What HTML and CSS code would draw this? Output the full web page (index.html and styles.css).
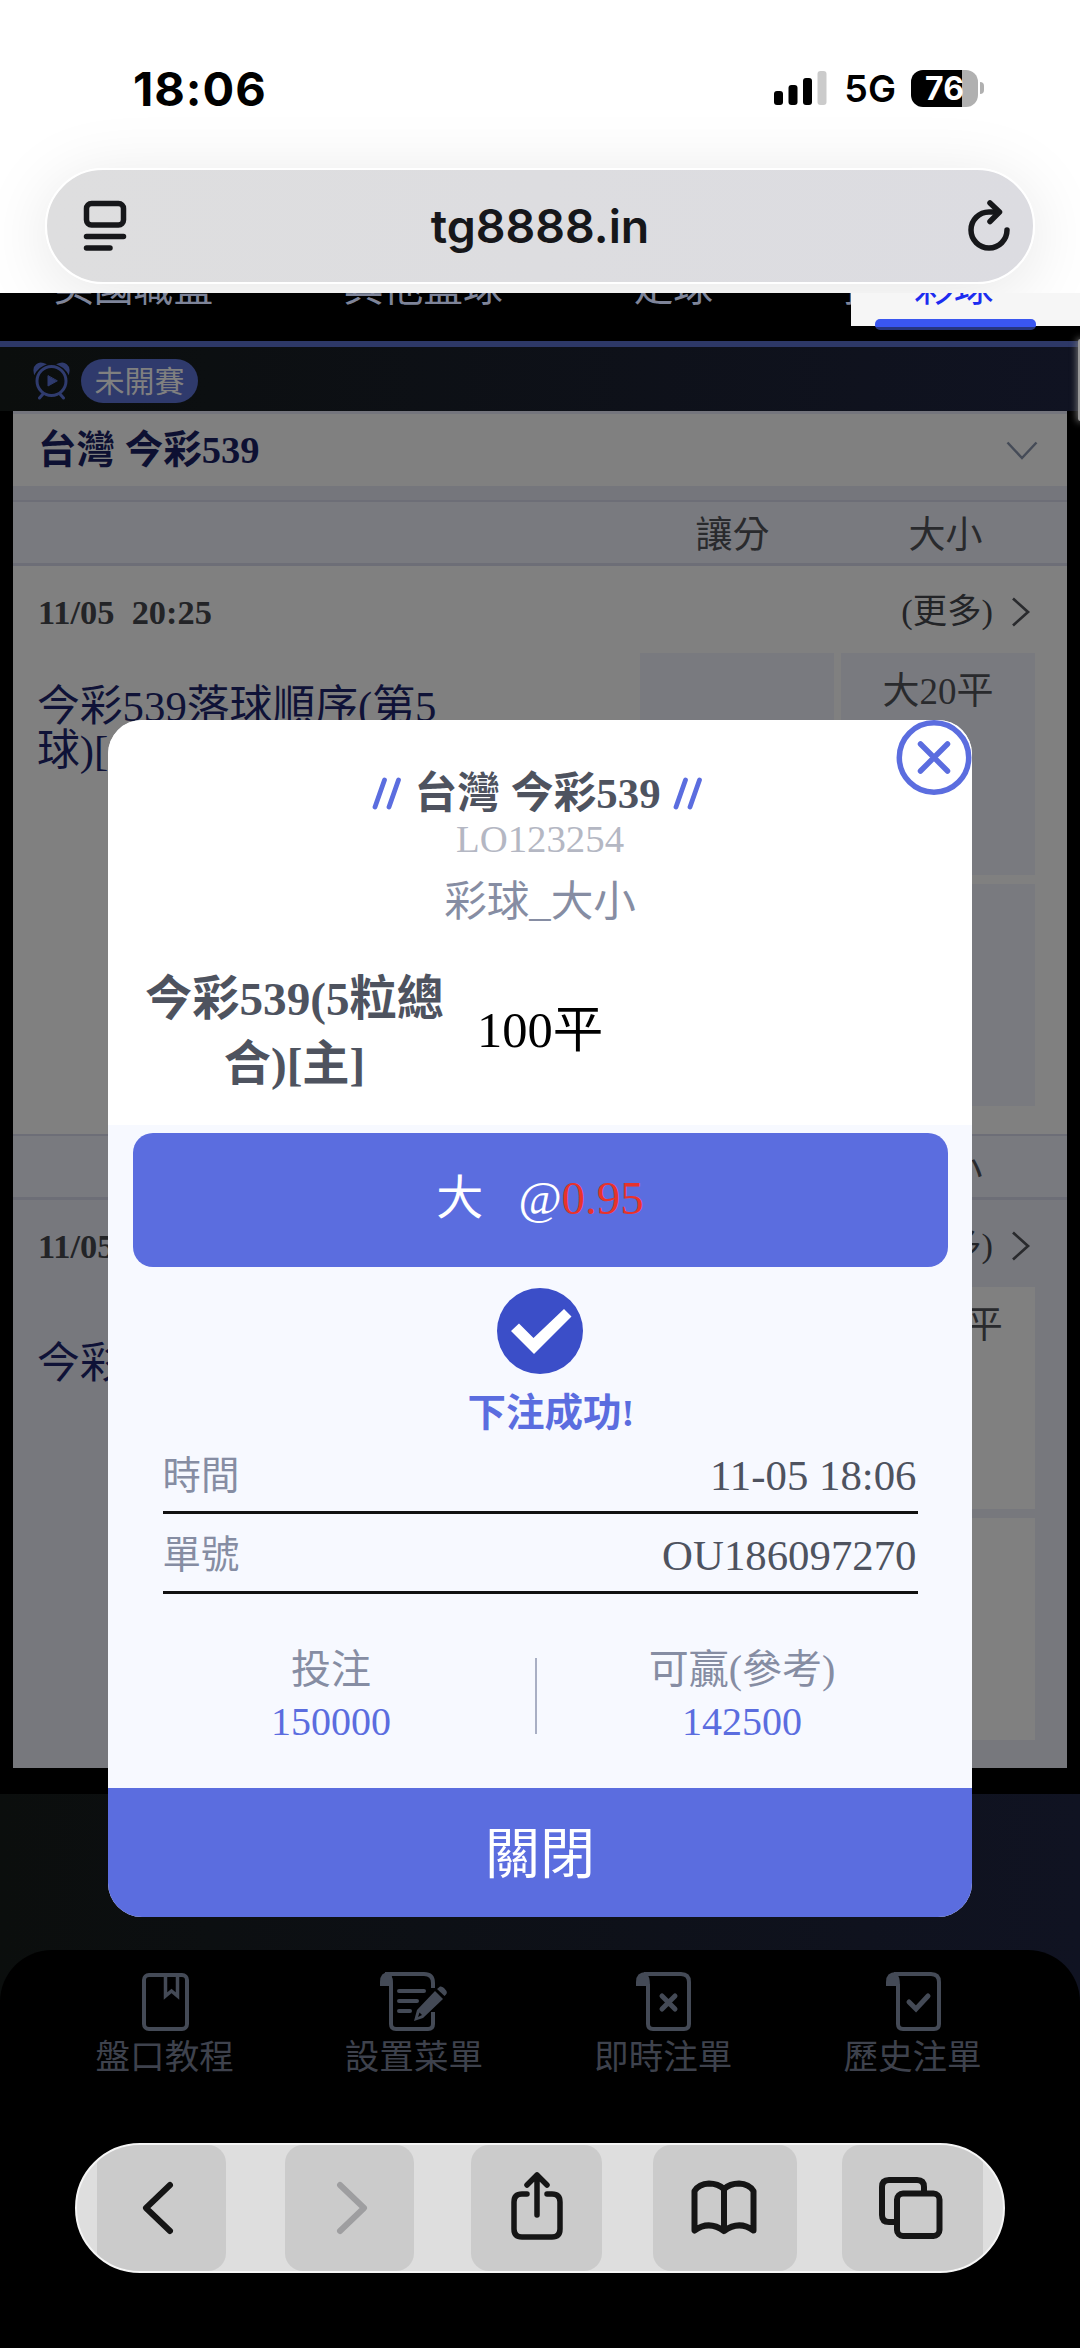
FILE: index.html
```html
<!DOCTYPE html>
<html lang="zh-Hant">
  <head>
    <meta charset="UTF-8" />
    <meta name="viewport" content="width=device-width, initial-scale=1.0" />
    <title>台灣 今彩539</title>
    <link rel="stylesheet" href="styles.css">
  </head>
  <body>
    <header class="browser-top">
      <div class="status-bar">
        <span class="status-time">18:06</span>
        <div class="status-icons">
          <svg class="signal" width="53" height="34" viewBox="0 0 53 34">
            <rect x="0" y="20" width="9" height="14" rx="3" />
            <rect x="14.5" y="14" width="9" height="20" rx="3" />
            <rect x="29" y="7" width="9" height="27" rx="3" />
            <rect x="43.5" y="0" width="9" height="34" rx="3" fill="#cbcbcb" />
          </svg>
          <span class="network">5G</span>
          <div class="battery"><span>76</span></div>
          <div class="battery-cap"></div>
        </div>
      </div>
      <div class="url-bar">
        <svg width="44" height="52" viewBox="0 0 44 52" fill="none" stroke="#16171a" stroke-width="5.5" stroke-linecap="round">
          <rect x="3.5" y="3.5" width="37" height="21.5" rx="5" />
          <path d="M3.500 36.500H40.500M3.500 48H27" />
        </svg>
        <span>tg8888.in</span>
        <svg width="44" height="52" viewBox="0 0 44 52" fill="none" stroke="#16171a" stroke-width="5.5" stroke-linecap="round" stroke-linejoin="round">
          <path d="M39 30A18 18 0 1 1 21 12H30" />
          <path d="M22 3L31.500 12L22 21.500" />
        </svg>
      </div>
    </header>

    <nav class="sport-tabs">
      <div class="tab-list">
        <span>美國職籃</span>
        <span>其他籃球</span>
        <span>足球</span>
        <span>排</span>
      </div>
      <div class="tab-active">
        <span>彩球</span>
      </div>
    </nav>

    <main>
      <div class="live-bar">
        <svg width="37" height="38" viewBox="0 0 37 38" fill="none" stroke="#2f3b6e" stroke-width="3" stroke-linecap="round">
          <circle cx="18.500" cy="19" r="14.500" />
          <path d="M10 32L6.500 36M27 32L30.500 36" />
          <path d="M2 9A6 6 0 0 1 10 2.500Q4.500 5 2 9ZM35 9A6 6 0 0 0 27 2.500Q32.500 5 35 9Z" fill="#2f3b6e" />
          <path d="M15 14V24L24 19Z" fill="#2f3b6e" stroke-width="1" />
        </svg>
        <span class="live-pill">未開賽</span>
        <i class="edge-glow"></i>
      </div>

      <div class="league">
        <div class="league-title">
          <span>台灣 今彩539</span>
          <svg width="32" height="20" viewBox="0 0 32 20" fill="none" stroke="#454b57" stroke-width="2.500">
            <path d="M1.500 1.500L16 17L30.500 1.500" />
          </svg>
        </div>
        <div class="league-gap"></div>

        <section class="match">
          <div class="odds-head"><span>讓分</span><span>大小</span></div>
          <div class="match-info">
            <b>11/05&nbsp; 20:25</b>
            <span>(更多)</span>
            <svg width="20" height="30" viewBox="0 0 20 30" fill="none" stroke="#292a2d" stroke-width="2.700">
              <path d="M2 1.500L17 15L2 28.500" />
            </svg>
          </div>
          <div class="match-body">
            <p class="team">今彩539落球順序(第5<br>球)[主]</p>
            <div class="odds-grid">
              <div></div>
              <div>大20平</div>
              <div></div>
              <div></div>
            </div>
          </div>
        </section>

        <section class="match match-alt">
          <div class="odds-head"><span>讓分</span><span>大小</span></div>
          <div class="match-info">
            <b>11/05&nbsp; 20:25</b>
            <span>(更多)</span>
            <svg width="20" height="30" viewBox="0 0 20 30" fill="none" stroke="#292a2d" stroke-width="2.700">
              <path d="M2 1.500L17 15L2 28.500" />
            </svg>
          </div>
          <div class="match-body">
            <p class="team">今彩539</p>
            <div class="odds-grid">
              <div></div>
              <div>大100平</div>
              <div></div>
              <div></div>
            </div>
          </div>
        </section>
      </div>
    </main>

    <footer>
      <div class="bottom-panel">
        <div class="bottom-nav">
          <div class="nav-item">
            <svg width="68" height="60" viewBox="0 0 68 60" fill="none" stroke="#444a56" stroke-width="4">
              <rect x="13" y="3" width="43" height="54" rx="5" />
              <path d="M34.500 4V24L40.500 19L46.500 24V4" stroke-width="3.500" />
            </svg>
            <span>盤口教程</span>
          </div>
          <div class="nav-item">
            <svg width="68" height="60" viewBox="0 0 68 60" fill="none" stroke="#444a56" stroke-width="4">
              <path d="M5 2H44Q53 2 53 11V16M53 40V52Q53 57 48 57H16Q11 57 11 52V12Q11 3 6 2" />
              <path d="M0 14V10Q0 0 9 0Q13 4 13 14Z" fill="#444a56" stroke="none" />
              <path d="M19 19H44M19 29H37M19 39H30" stroke-linecap="round" />
              <path d="M55 19L63 27L43 46L34 49L37 38ZM57 17L60 14.500Q62 14 64 16L66.500 19Q67.500 21 66 22.500L64.500 24Z" fill="#444a56" stroke="none" />
              <path d="M39.500 40.500L42 43L38 45Z" fill="#000" stroke="none" />
            </svg>
            <span>設置菜單</span>
          </div>
          <div class="nav-item">
            <svg width="68" height="60" viewBox="0 0 68 60" fill="none" stroke="#444a56" stroke-width="4">
              <path d="M15 2H52Q60 2 60 10V52Q60 57 55 57H24Q19 57 19 52V12" />
              <path d="M7 14V10Q7 0 17 0Q21 4 21 14Z" fill="#444a56" stroke="none" />
              <path d="M33 24L46 37M46 24L33 37" stroke-width="5" stroke-linecap="round" />
            </svg>
            <span>即時注單</span>
          </div>
          <div class="nav-item">
            <svg width="68" height="60" viewBox="0 0 68 60" fill="none" stroke="#444a56" stroke-width="4">
              <path d="M15 2H52Q60 2 60 10V52Q60 57 55 57H24Q19 57 19 52V12" />
              <path d="M7 14V10Q7 0 17 0Q21 4 21 14Z" fill="#444a56" stroke="none" />
              <path d="M30 30L37 37L49 24" stroke-width="5" stroke-linecap="round" />
            </svg>
            <span>歷史注單</span>
          </div>
        </div>

        <div class="toolbar">
          <div class="tool tool-back">
            <svg width="36" height="60" viewBox="0 0 36 60" fill="none" stroke="#151515" stroke-width="6" stroke-linecap="round" stroke-linejoin="round">
              <path d="M29 7L5 30L29 53" />
            </svg>
          </div>
          <div class="tool tool-forward">
            <svg width="36" height="60" viewBox="0 0 36 60" fill="none" stroke="#9e9ea0" stroke-width="6" stroke-linecap="round" stroke-linejoin="round">
              <path d="M8 7L32 30L8 53" />
            </svg>
          </div>
          <div class="tool tool-share">
            <svg width="56" height="70" viewBox="0 0 56 70" fill="none" stroke="#151515" stroke-width="5.500" stroke-linecap="round" stroke-linejoin="round">
              <path d="M18 23H13Q5 23 5 31V58Q5 66 13 66H43Q51 66 51 58V31Q51 23 43 23H38" />
              <path d="M28 44V4M18 14L28 4L38 14" />
            </svg>
          </div>
          <div class="tool tool-book">
            <svg width="66" height="56" viewBox="0 0 66 56" fill="none" stroke="#151515" stroke-width="6" stroke-linecap="round" stroke-linejoin="round">
              <path d="M33 9V51Q18 40 3.500 50.500V11Q8 4 18 3.500Q27 3.500 33 9Q39 3.500 48 3.500Q58 4 62.500 11V50.500Q48 40 33 51" />
            </svg>
          </div>
          <div class="tool tool-tabs">
            <svg width="64" height="62" viewBox="0 0 64 62" fill="none" stroke="#151515" stroke-width="6">
              <path d="M15 45H10Q3 45 3 38V10Q3 3 10 3H38Q45 3 45 10V15" />
              <rect x="18" y="16.500" width="42.500" height="42.500" rx="6" />
            </svg>
          </div>
        </div>
      </div>
    </footer>

    <div class="dialog">
      <svg class="dialog-close" width="76" height="76" viewBox="0 0 76 76" fill="#fff" stroke="#5b6ddf" stroke-width="5.500" stroke-linecap="round">
        <circle cx="38" cy="37.500" r="34.700" />
        <path d="M24.500 24L51.500 51M51.500 24L24.500 51" />
      </svg>
      <div class="dialog-head">
        <h2>
          <svg width="30" height="34" viewBox="0 0 30 34" stroke="#5b6ddf" stroke-width="4.800" stroke-linecap="round"><path d="M3 30L12.500 3M17 30L26.500 3" /></svg>
          <span>台灣 今彩539</span>
          <svg width="30" height="34" viewBox="0 0 30 34" stroke="#5b6ddf" stroke-width="4.800" stroke-linecap="round"><path d="M3 30L12.500 3M17 30L26.500 3" /></svg>
        </h2>
        <p class="game-no">LO123254</p>
        <p class="game-type">彩球_大小</p>
        <div class="versus">
          <b>今彩539(5粒總<br>合)[主]</b>
          <span>100平</span>
        </div>
      </div>
      <div class="dialog-body">
        <div class="pick">大<span class="at">@</span><em>0.95</em></div>
        <svg class="success-icon" width="86" height="86" viewBox="0 0 86 86">
          <circle cx="43" cy="43" r="43" fill="#3b4ec8" />
          <path d="M14 43L22 35.500L36.500 50L67 21L74.500 28.500L37 66Z" fill="#fff" />
        </svg>
        <p class="success">下注成功!</p>
        <div class="detail"><span>時間</span><strong>11-05 18:06</strong></div>
        <div class="detail detail-no"><span>單號</span><strong>OU186097270</strong></div>
        <div class="amounts">
          <div class="stake"><span>投注</span><strong>150000</strong></div>
          <i></i>
          <div class="win"><span>可贏(參考)</span><strong>142500</strong></div>
        </div>
      </div>
      <button class="dialog-button">關閉</button>
    </div>
  </body>
</html>
```
FILE: styles.css
```css
* {
  box-sizing: border-box;
}

body {
  position: relative;
  margin: 0;
  width: 1080px;
  height: 2348px;
  overflow: hidden;
  background-color: #000;
  font-family: "Liberation Serif", "Noto Sans CJK TC", serif;
}

p,
h2 {
  margin: 0;
}

svg {
  display: block;
  flex: none;
}

/* browser header */
.browser-top {
  height: 293px;
  padding: 0 45px;
  background-color: #fff;
  overflow: hidden;
  font-family: Inter, sans-serif;
}

.status-bar {
  display: flex;
  justify-content: space-between;
  align-items: center;
  height: 168px;
  padding: 8px 51px 0 88px;
}

.status-time {
  font-size: 47px;
  font-weight: 700;
  letter-spacing: 1px;
}

.status-icons {
  display: flex;
  align-items: center;
}

.network {
  margin: 0 15px 0 17px;
  font-size: 37.5px;
  font-weight: 600;
}

.battery {
  width: 67px;
  height: 37px;
  border-radius: 12px;
  background: linear-gradient(to right, #000 51px, #b0b0b0 51px);
  color: #fff;
  font-size: 32px;
  font-weight: 700;
  line-height: 37px;
  text-align: center;
}

.battery-cap {
  width: 4px;
  height: 12px;
  margin-left: 2px;
  border-radius: 0 4px 4px 0;
  background-color: #b0b0b0;
}

.url-bar {
  display: flex;
  justify-content: space-between;
  align-items: center;
  height: 116px;
  padding: 0 21px 0 36px;
  border: 2px solid #fff;
  border-radius: 58px;
  background: linear-gradient(to right, #dededf, #dcdce1);
  box-shadow: 0 10px 70px rgba(0, 0, 0, 0.1);
  color: #16171a;
  font-size: 46.5px;
  font-weight: 600;
}

.url-bar span {
  margin-right: 15px;
}

/* sport tabs */
.sport-tabs {
  display: flex;
  height: 54px;
  border-bottom: 6px solid #2d3867;
  font-size: 39.8px;
  line-height: 40px;
}

.tab-list {
  display: flex;
  gap: 130.5px;
  width: 851px;
  padding-left: 54px;
  overflow: hidden;
  color: #7e8499;
  white-space: nowrap;
}

.tab-list span,
.tab-active span {
  margin-top: -25px;
}

.tab-active {
  display: flex;
  flex-direction: column;
  width: 229px;
  height: 38px;
  padding-left: 24px;
  overflow: hidden;
  background: linear-gradient(to bottom, #f6f6f6 33px, #000 33px);
  color: #1c2cf0;
}

.tab-active span {
  padding-left: 39px;
}

.tab-active::after {
  content: "";
  width: 161px;
  height: 11px;
  margin-top: 11px;
  border-radius: 5px;
  background: linear-gradient(to bottom, #3a56f0 8px, #26357d 8px);
}

/* match list */
.live-bar {
  position: relative;
  display: flex;
  align-items: center;
  gap: 11px;
  height: 64px;
  padding: 4px 33px 0;
  background: linear-gradient(to right, #0b0e0d, #101322);
}

.live-pill {
  width: 117px;
  height: 44px;
  border-radius: 22px;
  background-color: #2f3a6c;
  color: #808080;
  font-size: 30px;
  line-height: 45px;
  text-align: center;
}

.edge-glow {
  position: absolute;
  top: -8px;
  right: -3px;
  width: 5px;
  height: 82px;
  border-radius: 5px;
  background-color: #999;
  box-shadow: 0 0 7px 1px #777;
}

.league {
  margin: 0 13px;
  height: 1357px;
  background-color: #77787d;
}

.league-title {
  display: flex;
  justify-content: space-between;
  align-items: center;
  height: 75px;
  padding: 2px 29px 0 25px;
  border-top: 3px solid #74757d;
  background-color: #808080;
  color: #0d1032;
  font-size: 38.500px;
  font-weight: 700;
  line-height: 40px;
}

.league-title span {
  margin-bottom: 2px;
}

.league-gap {
  height: 14px;
  background-color: #75767c;
}

.match {
  height: 634px;
  background-color: #808080;
}

.odds-head {
  display: flex;
  justify-content: flex-end;
  height: 66px;
  padding-right: 15px;
  border-top: 2px solid #6d6e77;
  border-bottom: 3px solid #6d6e77;
  background-color: #797a7f;
  color: #292a2d;
  font-size: 37px;
  line-height: 68px;
  text-align: center;
}

.odds-head span {
  width: 213px;
}

.match-info {
  display: flex;
  align-items: center;
  height: 87px;
  padding: 5px 36px 0 25px;
  color: #232427;
  font-size: 34.400px;
  line-height: 40px;
}

.match-info span {
  margin: 0 18px 2px auto;
}

.match-body {
  display: flex;
  justify-content: space-between;
  padding: 0 32px 0 24px;
}

.team {
  padding-top: 32px;
  color: #0f1237;
  font-size: 42.8px;
  line-height: 44px;
}

.odds-grid {
  display: grid;
  grid-template-columns: 194px 194px;
  grid-auto-rows: 222px;
  gap: 9px 7px;
}

.odds-grid div {
  padding-top: 18px;
  background-color: #797a7f;
  color: #292a2d;
  font-size: 37px;
  line-height: 42px;
  text-align: center;
}

.match-alt {
  background-color: #77787d;
}

.match-alt .odds-grid div {
  background-color: #808080;
}

.match-alt .team {
  padding-top: 55px;
}

/* bottom area */
footer {
  margin-top: 26px;
  padding-top: 156px;
  background: linear-gradient(to right, #0b0e0d, #101322);
}

.bottom-panel {
  height: 398px;
  padding-top: 22px;
  border-radius: 52px 52px 0 0;
  background-color: #000;
}

.bottom-nav {
  display: flex;
  padding: 0 40px;
}

.nav-item {
  display: flex;
  flex-direction: column;
  align-items: center;
  gap: 4px;
  width: 249.3px;
  color: #3e424d;
  font-size: 34.6px;
  line-height: 42px;
}

.toolbar {
  display: flex;
  height: 130px;
  margin: 65px 75px 0;
  padding-left: 20px;
  border: 2px solid #f5f5f5;
  border-radius: 65px;
  overflow: hidden;
  background-color: #dedede;
}

.tool {
  display: flex;
  justify-content: center;
  align-items: center;
  border-radius: 18px;
  background-color: #cbcbcb;
}

.tool-back {
  width: 129px;
  padding-right: 6px;
}

.tool-forward {
  width: 129px;
  margin-left: 59px;
}

.tool-share {
  width: 131px;
  margin-left: 57px;
  padding-bottom: 4px;
}

.tool-book {
  width: 144px;
  margin-left: 51px;
  padding-right: 2px;
}

.tool-tabs {
  width: 141px;
  margin-left: 45px;
  padding-right: 3px;
  border-radius: 18px 0 0 18px;
}

/* bet result dialog */
.dialog {
  position: absolute;
  top: 720px;
  left: 108px;
  width: 864px;
  height: 1197px;
  border-radius: 34px;
  overflow: hidden;
  background-color: #f7f9ff;
  color: #4e535f;
}

.dialog-close {
  position: absolute;
  top: 0;
  right: 0;
}

.dialog-head {
  height: 405px;
  padding-top: 50px;
  background-color: #fff;
  text-align: center;
}

.dialog-head h2 {
  display: flex;
  justify-content: center;
  align-items: center;
  gap: 12px;
  padding-right: 5px;
  font-size: 42.8px;
  line-height: 48px;
}

.game-no {
  color: #b4b7c3;
  font-size: 38.8px;
  line-height: 41px;
}

.game-type {
  margin-top: 15px;
  color: #868da3;
  font-size: 42.6px;
  line-height: 56px;
}

.versus {
  display: flex;
  align-items: center;
  margin-top: 37px;
  padding-left: 33px;
  font-size: 47.2px;
  line-height: 65px;
}

.versus b {
  width: 307px;
}

.versus span {
  margin: 0 0 3px 29px;
  color: #000;
  font-size: 50.5px;
}

.dialog-body {
  display: flex;
  flex-direction: column;
  align-items: center;
  height: 663px;
  padding-top: 8px;
}

.pick {
  display: flex;
  justify-content: center;
  width: 815px;
  height: 134px;
  border-radius: 20px;
  background-color: #5b6ddf;
  color: #fff;
  font-size: 47px;
  line-height: 130px;
}

.pick .at {
  margin-left: 35px;
  font-style: italic;
}

.pick em {
  color: #e8332b;
  font-style: normal;
}

.success-icon {
  margin-top: 21px;
}

.success {
  padding-left: 22px;
  color: #5b6ddf;
  font-size: 38.5px;
  font-weight: 700;
  line-height: 78px;
}

.detail {
  display: flex;
  justify-content: space-between;
  width: 755px;
  height: 62px;
  border-bottom: 3px solid #111;
  color: #868da3;
  font-size: 38.4px;
  line-height: 48px;
}

.detail-no {
  height: 80px;
  line-height: 83px;
}

.detail strong {
  padding-right: 1px;
  color: #4e535f;
  font-size: 42.8px;
  font-weight: 400;
}

.amounts {
  display: flex;
  align-items: center;
  width: 864px;
  padding: 50px 0 0 35px;
  color: #868da3;
  font-size: 40px;
  line-height: 52px;
  text-align: center;
}

.amounts div {
  display: flex;
  flex-direction: column;
}

.amounts .stake {
  width: 376px;
}

.amounts .win {
  width: 410px;
}

.amounts strong {
  color: #5b6ddf;
  font-weight: 400;
}

.amounts i {
  width: 2px;
  height: 76px;
  margin-left: 16px;
  background-color: #a9afc4;
}

.dialog-button {
  display: block;
  width: 100%;
  height: 129px;
  padding: 0 0 8px;
  border: none;
  background-color: #5b6ddf;
  color: #fff;
  font-family: inherit;
  font-size: 55px;
}
```
